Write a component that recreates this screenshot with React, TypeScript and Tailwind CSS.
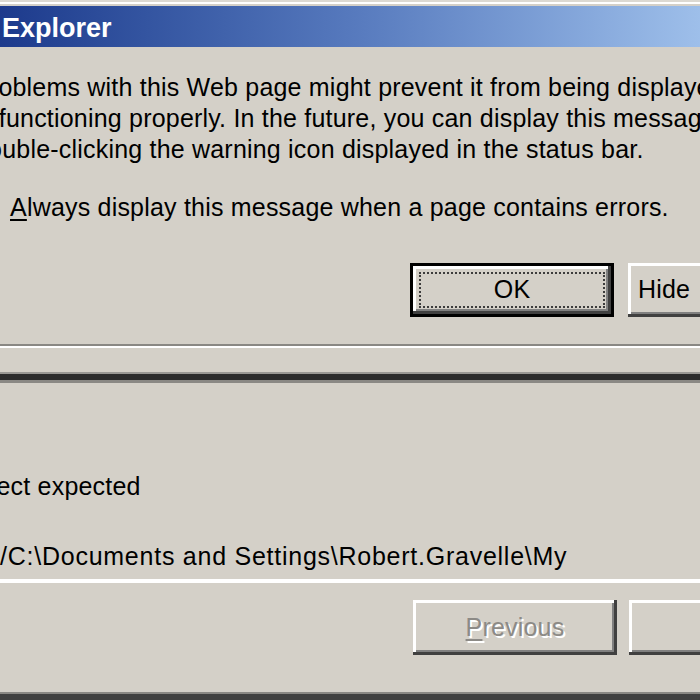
import React from "react";

const raised =
  "shadow-[inset_-3px_-3px_0_#404040,inset_3px_3px_0_#ffffff,inset_-5px_-5px_0_#808080]";

function Button({
  label,
  className,
  isDefault,
  disabled,
}: {
  label: React.ReactNode;
  className: string;
  isDefault?: boolean;
  disabled?: boolean;
}) {
  if (isDefault) {
    return (
      <div className={`border-[3px] border-black flex ${className}`}>
        <div className={`flex-1 flex p-[6px] ${raised}`}>
          <div className="flex-1 flex items-center justify-center border-[2px] border-dotted border-[#3c3c3c]">
            {label}
          </div>
        </div>
      </div>
    );
  }
  return (
    <div
      className={`flex items-center justify-center ${raised} ${className} ${
        disabled ? "text-[#8c8a86] [text-shadow:2px_2px_0_#ffffff]" : ""
      }`}
    >
      {label}
    </div>
  );
}

export default function App() {
  return (
    <div className="w-[700px] h-[700px] overflow-hidden bg-[#d4d0c8] flex flex-col font-['Liberation_Sans',Arial,sans-serif] text-black text-[25px] tracking-[0.2px]">
      {/* window frame top */}
      <div className="h-[2px] shrink-0 bg-[#dcd9d2]" />
      <div className="h-[2px] shrink-0 bg-white" />
      <div className="h-[2px] shrink-0 bg-[#d4d0c8]" />

      {/* title bar */}
      <div className="h-[41px] shrink-0 bg-gradient-to-r from-[#1d3a8c] via-[#5679bd] to-[#9ebfea] flex items-center pl-[2px] pt-[3px] text-white font-bold text-[27px] tracking-normal leading-none">
        Explorer
      </div>

      {/* message */}
      <div className="mt-[25px] ml-[-27px] leading-[31px] whitespace-nowrap">
        <div>Problems with this Web page might prevent it from being displayed</div>
        <div className="ml-[-4px]">or functioning properly. In the future, you can display this message</div>
        <div className="ml-[1px]">double-clicking the warning icon displayed in the status bar.</div>
      </div>

      <div className="mt-[27px] ml-[10px] leading-[31px] whitespace-nowrap">
        <span className="underline underline-offset-[3px]">A</span>lways display this message
        when a page contains errors.
      </div>

      {/* buttons */}
      <div className="mt-[40px] h-[54px] shrink-0 flex gap-[14px] pl-[410px]">
        <Button label="OK" className="w-[204px] shrink-0" isDefault />
        <Button label={<span className="pl-[10px]">Hide</span>} className="w-[120px] shrink-0 justify-start" />
      </div>

      {/* separator */}
      <div className="mt-[27px] h-[2px] shrink-0 bg-[#8a8884]" />
      <div className="h-[2px] shrink-0 bg-white" />

      {/* details frame */}
      <div className="mt-[24px] h-[2px] shrink-0 bg-[#9a9894]" />
      <div className="h-[6px] shrink-0 bg-[#2c2c2c]" />
      <div className="h-[3px] shrink-0 bg-[#8a8884]" />

      <div className="mt-[16px] leading-[35px] whitespace-nowrap">
        <div className="ml-[-43px]">1</div>
        <div className="ml-[-43px]">1</div>
        <div className="ml-[-43px]">Object expected</div>
        <div className="ml-[-43px]">0</div>
        <div className="ml-[-58px] tracking-[0.75px]">file:///C:\Documents and Settings\Robert.Gravelle\My</div>
      </div>

      <div className="mt-[5px] h-[4px] shrink-0 bg-white" />

      {/* navigation buttons */}
      <div className="mt-[17px] h-[55px] shrink-0 flex gap-[12px] pl-[413px]">
        <Button
          label={
            <span>
              <span className="underline underline-offset-[3px]">P</span>revious
            </span>
          }
          className="w-[204px] shrink-0"
          disabled
        />
        <Button label="" className="w-[120px] shrink-0" />
      </div>

      {/* window frame bottom */}
      <div className="mt-auto h-[2px] shrink-0 bg-[#8a8884]" />
      <div className="h-[6px] shrink-0 bg-[#404040]" />
    </div>
  );
}
